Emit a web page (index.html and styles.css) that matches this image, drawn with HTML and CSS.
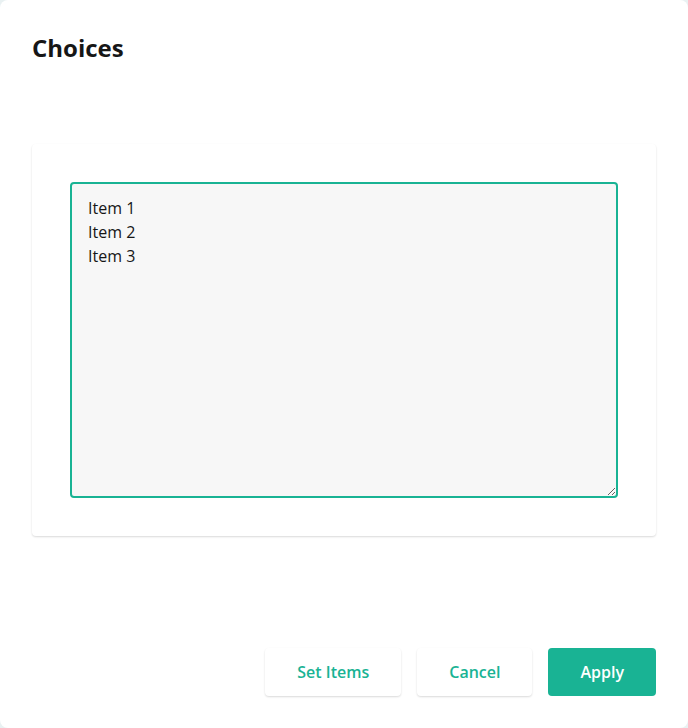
FILE: index.html
```html
<!DOCTYPE html>
<html>
<head>
<meta charset="utf-8">
<link rel="stylesheet" href="styles.css">
</head>
<body>
<div class="dialog">
  <h1 class="title">Choices</h1>
  <div class="panel">
    <textarea class="choices-input">Item 1
Item 2
Item 3</textarea>
  </div>
  <div class="footer">
    <button class="btn">Set Items</button>
    <button class="btn">Cancel</button>
    <button class="btn btn-primary">Apply</button>
  </div>
</div>
</body>
</html>
```
FILE: styles.css
```css
html, body {
  margin: 0;
  padding: 0;
  background: #e9f1f2;
  font-family: "Open Sans", sans-serif;
}
.dialog {
  box-sizing: border-box;
  width: 688px;
  height: 728px;
  background: #ffffff;
  border-radius: 8px;
  padding: 32px;
  display: flex;
  flex-direction: column;
}
.title {
  margin: 0;
  font-size: 24px;
  line-height: 32px;
  font-weight: 700;
  color: #161616;
}
.panel {
  margin-top: 80px;
  background: #fff;
  border-radius: 4px;
  box-shadow: 0 1px 2px rgba(0, 0, 0, 0.15);
  padding: 38px 38px 38px;
}
.choices-input {
  display: block;
  box-sizing: border-box;
  width: 548px;
  height: 316px;
  margin: 0;
  border: 2px solid #19b394;
  border-radius: 4px;
  background: #f7f7f7;
  padding: 12px 16px;
  font-family: "Open Sans", sans-serif;
  font-size: 16px;
  line-height: 24px;
  color: #161616;
  outline: none;
}
.footer {
  margin-top: auto;
  display: flex;
  justify-content: flex-end;
  gap: 16px;
}
.btn {
  height: 48px;
  padding: 0 32px;
  border: none;
  border-radius: 4px;
  background: #fff;
  box-shadow: 0 1px 2px rgba(0, 0, 0, 0.15);
  font-family: "Open Sans", sans-serif;
  font-size: 16px;
  font-weight: 600;
  color: #19b394;
  cursor: pointer;
}
.btn-primary {
  background: #19b394;
  color: #fff;
  box-shadow: none;
}
```
